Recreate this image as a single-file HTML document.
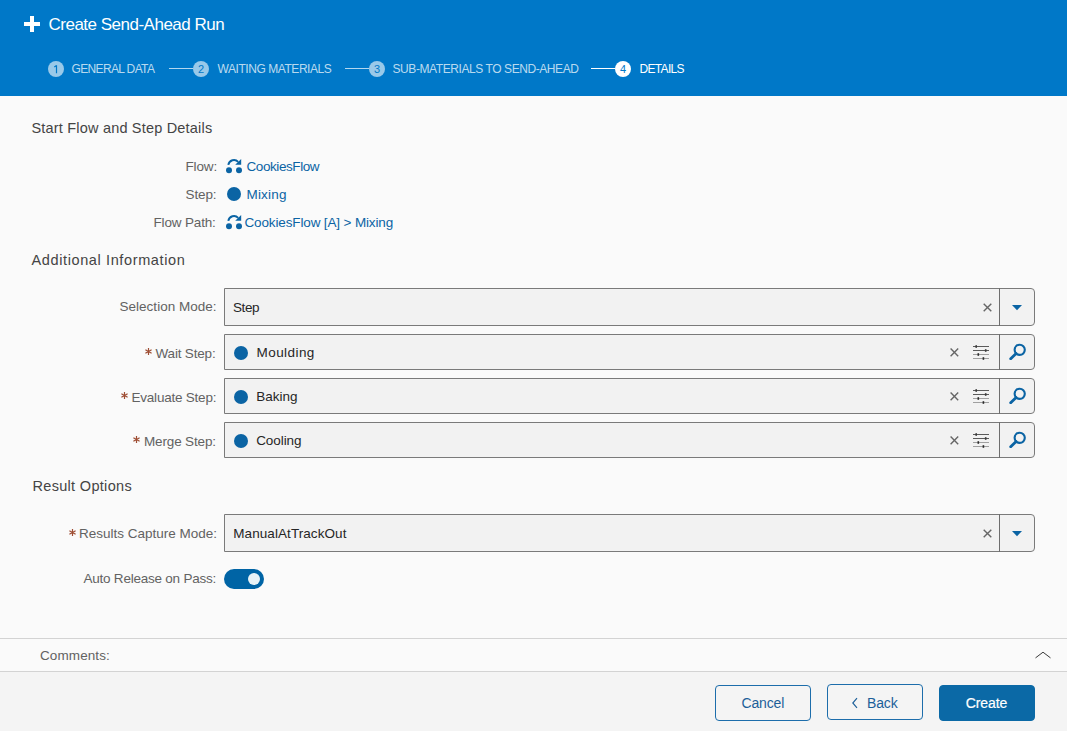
<!DOCTYPE html>
<html><head><meta charset="utf-8">
<style>
*{box-sizing:border-box;margin:0;padding:0}
html,body{width:1067px;height:731px;overflow:hidden}
body{position:relative;background:#fafafa;font-family:"Liberation Sans",sans-serif;color:#555}
.t{position:absolute;white-space:nowrap;line-height:1;z-index:5}
.ico{position:absolute;display:block}
#hdr{position:absolute;left:0;top:0;width:1067px;height:96px;background:#0078c8}
.plus-h{position:absolute;left:24px;top:22px;width:16px;height:4px;background:#fff}
.plus-v{position:absolute;left:30px;top:16px;width:4px;height:16px;background:#fff}
.stc{position:absolute;top:61px;width:16px;height:16px;border-radius:50%;background:rgba(255,255,255,.6);color:#0078c8;font-size:11px;line-height:16px;text-align:center}
.stc.act{background:#fff}
.stl{position:absolute;top:68px;height:1px;width:24px;background:rgba(255,255,255,.7)}
.stl.act{background:#fff}
.inp{position:absolute;left:224px;width:811px;background:#f2f2f2;border:1px solid #7a7a7a;border-radius:0 4px 4px 0}
.inp .div{position:absolute;left:774px;top:-1px;bottom:-1px;width:1px;background:#6e6e6e}
.dot{position:absolute;width:14px;height:14px;border-radius:50%;background:#0b64a4}
#cmt{position:absolute;left:0;top:638px;width:1067px;height:34px;border-top:1px solid #d3d3d3;border-bottom:1px solid #d3d3d3;background:#fafafa}
#ftr{position:absolute;left:0;top:672px;width:1067px;height:59px;background:#f4f4f4}
.btn{position:absolute;height:36px;width:96px;border:1px solid #1c6dab;border-radius:4px}
.btn.pri{background:#0b69a6;border-color:#0b69a6}
</style></head><body>
<div id="hdr">
  <div class="plus-h"></div><div class="plus-v"></div>
  <div class="stc" style="left:48px"><svg class="ico" style="left:0;top:0" width="16" height="16" viewBox="0 0 16 16"><path d="M8.5 4.2V12.2M8.5 4.4L6.3 5.9" stroke="#0078c8" stroke-width="1.2" fill="none"/></svg></div>
  <div class="stl" style="left:169px"></div>
  <div class="stc" style="left:193px">2</div>
  <div class="stl" style="left:345px"></div>
  <div class="stc" style="left:369px">3</div>
  <div class="stl act" style="left:591px"></div>
  <div class="stc act" style="left:615px">4</div>
</div>

<svg class="ico" style="left:226px;top:158px" width="16" height="16" viewBox="0 0 16 16"><path d="M2.3 6.8A5.8 5.8 0 0 1 12.2 3.8" stroke="#0b64a4" stroke-width="1.9" fill="none"/><path d="M15.2 0.9V6.8H9.2Z" fill="#0b64a4"/><circle cx="3" cy="12.2" r="3" fill="#0b64a4"/><circle cx="13" cy="12.2" r="3" fill="#0b64a4"/></svg>
<div class="dot" style="left:227px;top:187px"></div>
<svg class="ico" style="left:226px;top:214px" width="16" height="16" viewBox="0 0 16 16"><path d="M2.3 6.8A5.8 5.8 0 0 1 12.2 3.8" stroke="#0b64a4" stroke-width="1.9" fill="none"/><path d="M15.2 0.9V6.8H9.2Z" fill="#0b64a4"/><circle cx="3" cy="12.2" r="3" fill="#0b64a4"/><circle cx="13" cy="12.2" r="3" fill="#0b64a4"/></svg>


<div class="inp" style="top:288px;height:38px">
  <svg class="ico" style="left:758px;top:14px" width="10" height="10" viewBox="0 0 10 10"><path d="M0.7 0.7L8.3 8.3M8.3 0.7L0.7 8.3" stroke="#666" stroke-width="1.4"/></svg>
  <div class="div"></div>
  <svg class="ico" style="left:787px;top:16px" width="10" height="6" viewBox="0 0 10 6"><path d="M0 0H10L5 5.2Z" fill="#0b64a4"/></svg>
</div>
<svg class="ico" style="left:144.2px;top:347.2px" width="9" height="9" viewBox="0 0 9 9"><path d="M4.5 0.9V8.1M1.4 2.7L7.6 6.3M7.6 2.7L1.4 6.3" stroke="#9e4d33" stroke-width="1.2"/></svg>

<div class="inp" style="top:334px;height:36px">
  <div class="dot" style="left:9px;top:11px"></div>
  <svg class="ico" style="left:725px;top:13px" width="10" height="10" viewBox="0 0 10 10"><path d="M0.6 0.6L8.2 8.2M8.2 0.6L0.6 8.2" stroke="#666" stroke-width="1.4"/></svg>
  <svg class="ico" style="left:748px;top:10px" width="17" height="17" viewBox="0 0 17 17">
    <path d="M0 1.5H16M0 5.5H16" stroke="#5a5a5a" stroke-width="1"/>
    <path d="M0 9.5H16M0 13.5H16" stroke="#a0a0a0" stroke-width="1.2"/>
    <rect x="2.4" y="0.2" width="1.6" height="2.6" fill="#3a3a3a"/>
    <rect x="11.9" y="4.2" width="1.6" height="2.6" fill="#3a3a3a"/>
    <rect x="4.5" y="8.2" width="1.6" height="2.6" fill="#2a2a2a"/>
    <rect x="9.6" y="12.2" width="1.6" height="2.6" fill="#2a2a2a"/>
  </svg>
  <div class="div"></div>
  <svg class="ico" style="left:784px;top:7px" width="18" height="18" viewBox="0 0 18 18"><circle cx="10.7" cy="7.8" r="5.1" stroke="#0b64a4" stroke-width="2.1" fill="none"/><path d="M1.7 16.7L7.1 11.4" stroke="#0b64a4" stroke-width="2.8" stroke-linecap="round"/></svg>
</div>
<svg class="ico" style="left:119.9px;top:391.3px" width="9" height="9" viewBox="0 0 9 9"><path d="M4.5 0.9V8.1M1.4 2.7L7.6 6.3M7.6 2.7L1.4 6.3" stroke="#9e4d33" stroke-width="1.2"/></svg>

<div class="inp" style="top:378px;height:36px">
  <div class="dot" style="left:9px;top:11px"></div>
  <svg class="ico" style="left:725px;top:13px" width="10" height="10" viewBox="0 0 10 10"><path d="M0.6 0.6L8.2 8.2M8.2 0.6L0.6 8.2" stroke="#666" stroke-width="1.4"/></svg>
  <svg class="ico" style="left:748px;top:10px" width="17" height="17" viewBox="0 0 17 17">
    <path d="M0 1.5H16M0 5.5H16" stroke="#5a5a5a" stroke-width="1"/>
    <path d="M0 9.5H16M0 13.5H16" stroke="#a0a0a0" stroke-width="1.2"/>
    <rect x="2.4" y="0.2" width="1.6" height="2.6" fill="#3a3a3a"/>
    <rect x="11.9" y="4.2" width="1.6" height="2.6" fill="#3a3a3a"/>
    <rect x="4.5" y="8.2" width="1.6" height="2.6" fill="#2a2a2a"/>
    <rect x="9.6" y="12.2" width="1.6" height="2.6" fill="#2a2a2a"/>
  </svg>
  <div class="div"></div>
  <svg class="ico" style="left:784px;top:7px" width="18" height="18" viewBox="0 0 18 18"><circle cx="10.7" cy="7.8" r="5.1" stroke="#0b64a4" stroke-width="2.1" fill="none"/><path d="M1.7 16.7L7.1 11.4" stroke="#0b64a4" stroke-width="2.8" stroke-linecap="round"/></svg>
</div>
<svg class="ico" style="left:132.4px;top:435.3px" width="9" height="9" viewBox="0 0 9 9"><path d="M4.5 0.9V8.1M1.4 2.7L7.6 6.3M7.6 2.7L1.4 6.3" stroke="#9e4d33" stroke-width="1.2"/></svg>

<div class="inp" style="top:422px;height:36px">
  <div class="dot" style="left:9px;top:11px"></div>
  <svg class="ico" style="left:725px;top:13px" width="10" height="10" viewBox="0 0 10 10"><path d="M0.6 0.6L8.2 8.2M8.2 0.6L0.6 8.2" stroke="#666" stroke-width="1.4"/></svg>
  <svg class="ico" style="left:748px;top:10px" width="17" height="17" viewBox="0 0 17 17">
    <path d="M0 1.5H16M0 5.5H16" stroke="#5a5a5a" stroke-width="1"/>
    <path d="M0 9.5H16M0 13.5H16" stroke="#a0a0a0" stroke-width="1.2"/>
    <rect x="2.4" y="0.2" width="1.6" height="2.6" fill="#3a3a3a"/>
    <rect x="11.9" y="4.2" width="1.6" height="2.6" fill="#3a3a3a"/>
    <rect x="4.5" y="8.2" width="1.6" height="2.6" fill="#2a2a2a"/>
    <rect x="9.6" y="12.2" width="1.6" height="2.6" fill="#2a2a2a"/>
  </svg>
  <div class="div"></div>
  <svg class="ico" style="left:784px;top:7px" width="18" height="18" viewBox="0 0 18 18"><circle cx="10.7" cy="7.8" r="5.1" stroke="#0b64a4" stroke-width="2.1" fill="none"/><path d="M1.7 16.7L7.1 11.4" stroke="#0b64a4" stroke-width="2.8" stroke-linecap="round"/></svg>
</div>

<svg class="ico" style="left:67.9px;top:527.6px" width="9" height="9" viewBox="0 0 9 9"><path d="M4.5 0.9V8.1M1.4 2.7L7.6 6.3M7.6 2.7L1.4 6.3" stroke="#9e4d33" stroke-width="1.2"/></svg>

<div class="inp" style="top:514px;height:38px">
  <svg class="ico" style="left:758px;top:14px" width="10" height="10" viewBox="0 0 10 10"><path d="M0.7 0.7L8.3 8.3M8.3 0.7L0.7 8.3" stroke="#666" stroke-width="1.4"/></svg>
  <div class="div"></div>
  <svg class="ico" style="left:787px;top:16px" width="10" height="6" viewBox="0 0 10 6"><path d="M0 0H10L5 5.2Z" fill="#0b64a4"/></svg>
</div>
<div style="position:absolute;left:224px;top:569px;width:40px;height:20px;border-radius:10px;background:#0064a5"></div>
<div style="position:absolute;left:248px;top:573px;width:12px;height:12px;border-radius:6px;background:#e8f3f7"></div>

<div id="cmt">
  <svg class="ico" style="left:1034px;top:11px" width="18" height="10" viewBox="0 0 18 10"><path d="M1.5 7.9L9 2.2L16.5 7.9" stroke="#3a3a3a" stroke-width="1" fill="none"/></svg>
</div>
<div id="ftr">
  <div class="btn" style="left:715px;top:13px"></div>
  <div class="btn" style="left:827px;top:12px"></div>
  <div class="btn pri" style="left:939px;top:13px"></div>
</div>
<svg class="ico" style="left:851px;top:697px;z-index:6" width="8" height="12" viewBox="0 0 8 12"><path d="M6 1.2L1.8 6L6 10.8" stroke="#1c5f99" stroke-width="1.15" fill="none"/></svg>
<div class="t" style="left:48.50px;top:15.61px;font-size:17px;letter-spacing:-0.5px;color:#fff;">Create Send-Ahead Run</div>
<div class="t" style="left:71.50px;top:62.84px;font-size:12px;letter-spacing:-0.64px;color:rgba(255,255,255,.74);">GENERAL DATA</div>
<div class="t" style="left:217.50px;top:62.84px;font-size:12px;letter-spacing:-0.44px;color:rgba(255,255,255,.74);">WAITING MATERIALS</div>
<div class="t" style="left:392.50px;top:62.84px;font-size:12px;letter-spacing:-0.42px;color:rgba(255,255,255,.74);">SUB-MATERIALS TO SEND-AHEAD</div>
<div class="t" style="left:639.50px;top:62.84px;font-size:12px;letter-spacing:-0.67px;color:#fff;">DETAILS</div>
<div class="t" style="left:31.50px;top:120.73px;font-size:14.5px;letter-spacing:0.19px;color:#444;">Start Flow and Step Details</div>
<div class="t" style="left:31.50px;top:252.73px;font-size:14.5px;letter-spacing:0.62px;color:#444;">Additional Information</div>
<div class="t" style="left:32.50px;top:478.73px;font-size:14.5px;letter-spacing:0.31px;color:#444;">Result Options</div>
<div class="t" style="left:185.50px;top:159.57px;font-size:13.5px;letter-spacing:-0.15px;color:#626262;">Flow:</div>
<div class="t" style="left:185.50px;top:187.57px;font-size:13.5px;letter-spacing:-0.12px;color:#626262;">Step:</div>
<div class="t" style="left:153.50px;top:215.57px;font-size:13.5px;letter-spacing:-0.16px;color:#626262;">Flow Path:</div>
<div class="t" style="left:119.50px;top:299.57px;font-size:13.5px;letter-spacing:0.02px;color:#626262;">Selection Mode:</div>
<div class="t" style="left:155.50px;top:346.57px;font-size:13.5px;letter-spacing:-0.18px;color:#626262;">Wait Step:</div>
<div class="t" style="left:131.50px;top:390.57px;font-size:13.5px;letter-spacing:-0.22px;color:#626262;">Evaluate Step:</div>
<div class="t" style="left:144.00px;top:434.57px;font-size:13.5px;letter-spacing:-0.15px;color:#626262;">Merge Step:</div>
<div class="t" style="left:79.00px;top:526.57px;font-size:13.5px;letter-spacing:0.0px;color:#626262;">Results Capture Mode:</div>
<div class="t" style="left:83.50px;top:571.57px;font-size:13.5px;letter-spacing:-0.23px;color:#626262;">Auto Release on Pass:</div>
<div class="t" style="left:40.00px;top:648.57px;font-size:13.5px;letter-spacing:0.1px;color:#626262;">Comments:</div>
<div class="t" style="left:246.50px;top:159.57px;font-size:13.5px;letter-spacing:-0.42px;color:#0b64a4;">CookiesFlow</div>
<div class="t" style="left:246.50px;top:187.57px;font-size:13.5px;letter-spacing:0.18px;color:#0b64a4;">Mixing</div>
<div class="t" style="left:244.50px;top:215.57px;font-size:13.5px;letter-spacing:-0.14px;color:#0b64a4;">CookiesFlow [A] &gt; Mixing</div>
<div class="t" style="left:233.00px;top:300.57px;font-size:13.5px;letter-spacing:-0.43px;color:#262626;">Step</div>
<div class="t" style="left:256.50px;top:345.57px;font-size:13.5px;letter-spacing:0.44px;color:#262626;">Moulding</div>
<div class="t" style="left:256.20px;top:389.57px;font-size:13.5px;letter-spacing:0.0px;color:#262626;">Baking</div>
<div class="t" style="left:256.20px;top:433.57px;font-size:13.5px;letter-spacing:-0.07px;color:#262626;">Cooling</div>
<div class="t" style="left:233.30px;top:526.57px;font-size:13.5px;letter-spacing:0.07px;color:#262626;">ManualAtTrackOut</div>
<div class="t" style="left:741.50px;top:696.15px;font-size:14px;letter-spacing:-0.16px;color:#1c5f99;">Cancel</div>
<div class="t" style="left:866.90px;top:696.15px;font-size:14px;letter-spacing:-0.1px;color:#1c5f99;">Back</div>
<div class="t" style="left:965.80px;top:696.15px;font-size:14px;letter-spacing:-0.12px;color:#fff;-webkit-text-stroke:0.2px #fff;">Create</div>
</body></html>
